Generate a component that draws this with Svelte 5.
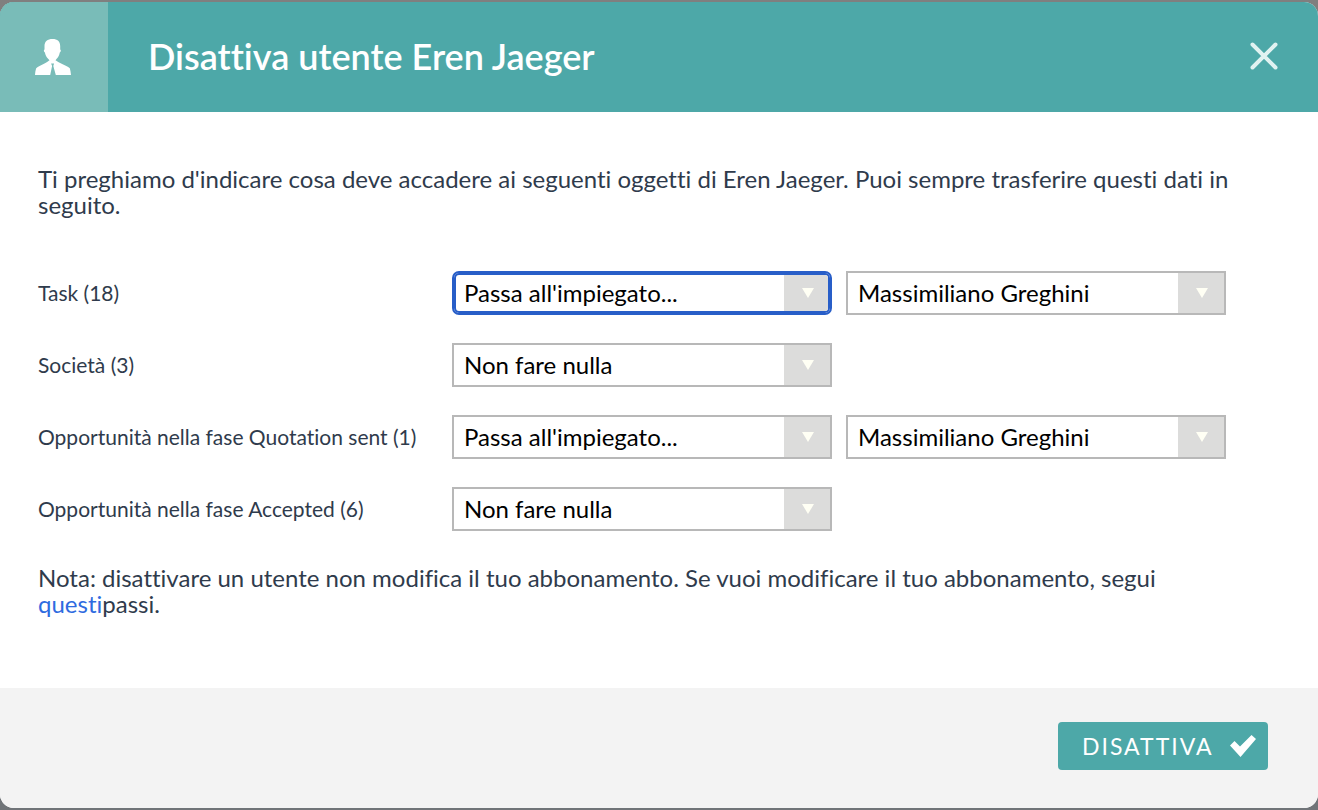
<script>
  const actions = ["Passa all'impiegato...", 'Non fare nulla'];
  const employees = ['Massimiliano Greghini', 'Eren Jaeger'];

  let rows = $state([
    { id: 'task', label: 'Task (18)', action: actions[0], employee: employees[0] },
    { id: 'company', label: 'Società (3)', action: actions[1], employee: employees[0] },
    { id: 'quotation', label: 'Opportunità nella fase Quotation sent (1)', action: actions[0], employee: employees[0] },
    { id: 'accepted', label: 'Opportunità nella fase Accepted (6)', action: actions[1], employee: employees[0] }
  ]);
  let active = $state('task');
</script>

{#snippet arrow()}
  <span class="arrow">
    <svg width="14" height="12" viewBox="0 0 14 12" aria-hidden="true"><path d="M1 1h12L7 11z" fill="#fffff4" /></svg>
  </span>
{/snippet}

<div class="backdrop">
  <div class="dialog" role="dialog" aria-labelledby="title">
    <header>
      <div class="badge">
        <svg width="36" height="36" viewBox="0 0 36 36" aria-hidden="true">
          <path
            fill="#fff"
            d="M17.500 0C12.500 0 9.500 2.500 9.500 7v3.500c-1 .2-.8 2.500.4 3 .4 2.600 1.600 4.800 3.200 6.200l1.400 1.500C12.500 23.500 5 26 1.200 29.200.4 31.500.2 33.500 0 36h15.200l1.900-9-1-2.500h3L18.300 27l2.500 9H36c-.3-2.500-.5-4.500-1.200-6.800C31 26 23 23.500 20.500 21.200l1.200-1.500c1.600-1.400 2.700-3.600 3.100-6.200 1.200-.5 1.400-2.800.4-3V7c0-4.500-2.700-7-7.700-7z"
          />
        </svg>
      </div>
      <h1 id="title">Disattiva utente Eren Jaeger</h1>
      <button class="close" type="button" aria-label="Chiudi">
        <svg width="28" height="28" viewBox="0 0 28 28" aria-hidden="true">
          <path d="M2.500 2.500l23 23M25.500 2.500l-23 23" stroke="#e0f2f1" stroke-width="4" stroke-linecap="round" />
        </svg>
      </button>
    </header>

    <main>
      <p>
        Ti preghiamo d'indicare cosa deve accadere ai seguenti oggetti di Eren Jaeger. Puoi sempre trasferire questi dati in seguito.
      </p>

      <div class="rows">
        {#each rows as row (row.id)}
          <div class="row">
            <label for={row.id}>{row.label}</label>
            <div class="select" class:active={active === row.id}>
              <select id={row.id} bind:value={row.action} onfocus={() => (active = row.id)}>
                {#each actions as action}<option>{action}</option>{/each}
              </select>
              {@render arrow()}
            </div>
            {#if row.action === actions[0]}
              <div class="select">
                <select aria-label="Impiegato" bind:value={row.employee} onfocus={() => (active = '')}>
                  {#each employees as employee}<option>{employee}</option>{/each}
                </select>
                {@render arrow()}
              </div>
            {/if}
          </div>
        {/each}
      </div>

      <p>
        Nota: disattivare un utente non modifica il tuo abbonamento. Se vuoi modificare il tuo abbonamento, segui <a href="#passi">questi</a>passi.
      </p>
    </main>

    <footer>
      <button class="submit" type="button">
        <span>DISATTIVA</span>
        <svg width="28" height="24" viewBox="0 0 28 24" aria-hidden="true">
          <path d="M1 11.500l4.500-4.500 5.500 5.500L22.500 1 27 5 11.500 23z" fill="#fff" />
        </svg>
      </button>
    </footer>
  </div>
</div>

<style>
  :global(body) {
    margin: 0;
  }

  .backdrop {
    box-sizing: border-box;
    min-height: 100vh;
    padding: 2px 0;
    display: flex;
    background: linear-gradient(#807f7f 50%, #707478 50%);
    font-family: Lato, 'Liberation Sans', sans-serif;
    font-size: 24px;
    line-height: 26px;
    font-variant-ligatures: none;
    color: #2f3b4c;
  }

  .dialog {
    flex: 1;
    display: flex;
    flex-direction: column;
    overflow: hidden;
    border-radius: 14px;
    background: #fff;
  }

  header {
    display: flex;
    align-items: center;
    min-height: 110px;
    padding-right: 40px;
    background: #4da8a8;
    color: #fff;
  }

  .badge {
    box-sizing: border-box;
    align-self: stretch;
    width: 108px;
    padding-right: 2px;
    display: flex;
    align-items: center;
    justify-content: center;
    background: #79bcb8;
  }

  h1 {
    flex: 1;
    margin: 0 40px;
    padding-bottom: 2px;
    font-size: 36px;
    line-height: 44px;
    font-weight: 600;
  }

  button {
    border: 0;
    font: inherit;
    color: #fff;
    cursor: pointer;
  }

  .close {
    display: flex;
    padding: 0 0 2px;
    background: none;
  }

  main {
    flex: 1;
    padding: 54px 60px 70px 38px;
  }

  p {
    margin: 0;
  }

  a {
    color: #2f6be0;
    text-decoration: none;
  }

  .rows {
    display: grid;
    gap: 28px;
    margin: 53px 0 34px;
  }

  .row {
    display: grid;
    grid-template-columns: 400px 380px 380px;
    column-gap: 14px;
    align-items: center;
  }

  label {
    font-size: 21px;
    white-space: nowrap;
  }

  .select {
    box-sizing: border-box;
    display: grid;
    grid-template-columns: 1fr 46px;
    height: 44px;
    border: 2px solid #b8b8b8;
    background: #fff;
  }

  .select.active {
    border-color: #285ec8;
    border-radius: 7px;
    box-shadow: inset 0 0 0 2px #285ec8;
  }

  select {
    grid-area: 1 / 1 / 2 / 3;
    min-width: 0;
    padding: 0 56px 0 10px;
    border: 0;
    outline: 0;
    appearance: none;
    background: none;
    font: inherit;
    font-variant-ligatures: none;
    color: #000;
  }

  .arrow {
    box-sizing: border-box;
    grid-area: 1 / 2;
    display: flex;
    align-items: center;
    justify-content: center;
    padding-left: 2px;
    background: #dcdcdb;
    pointer-events: none;
  }

  .active .arrow {
    margin: 2px 2px 2px 0;
    padding-left: 4px;
    border-radius: 0 3px 3px 0;
  }

  footer {
    display: flex;
    justify-content: flex-end;
    padding: 34px 50px 38px;
    background: #f3f3f3;
  }

  .submit {
    display: flex;
    align-items: center;
    justify-content: space-between;
    gap: 14px;
    min-width: 210px;
    height: 48px;
    padding: 0 11px 0 24px;
    border-radius: 4px;
    background: #4da8a8;
    font-size: 23px;
    letter-spacing: 2px;
  }
</style>
